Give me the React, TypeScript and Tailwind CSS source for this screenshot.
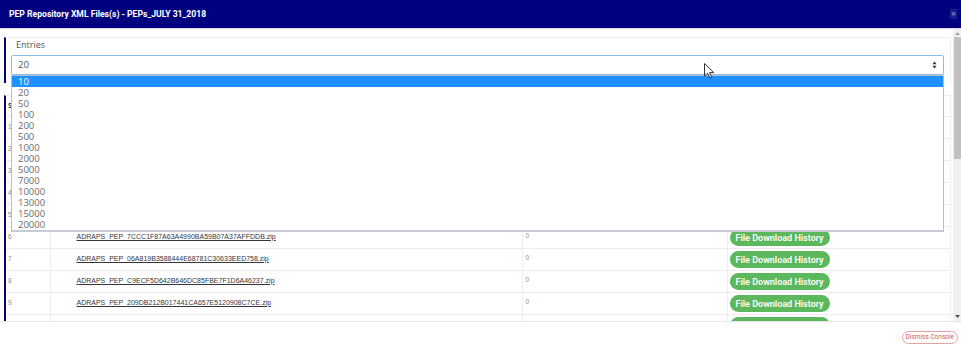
import React from "react";

const entryOptions = ["10", "20", "50", "100", "200", "500", "1000", "2000", "5000", "7000", "10000", "13000", "15000", "20000"];

const files = [
  { no: 1, name: "ADRAPS_PEP_1A2F3C4D5E6F47A8B9C0D1E2F3A4B5C6.zip", count: 0 },
  { no: 2, name: "ADRAPS_PEP_2B3C4D5E6F7A48B9C0D1E2F3A4B5C6D7.zip", count: 0 },
  { no: 3, name: "ADRAPS_PEP_3C4D5E6F7A8B49C0D1E2F3A4B5C6D7E8.zip", count: 0 },
  { no: 4, name: "ADRAPS_PEP_4D5E6F7A8B9C40D1E2F3A4B5C6D7E8F9.zip", count: 0 },
  { no: 5, name: "ADRAPS_PEP_5E6F7A8B9C0D41E2F3A4B5C6D7E8F9A0.zip", count: 0 },
  { no: 6, name: "ADRAPS_PEP_7CCC1F87A63A4990BA59B07A37AFFDDB.zip", count: 0 },
  { no: 7, name: "ADRAPS_PEP_06A819B3588444E68781C30633EED758.zip", count: 0 },
  { no: 8, name: "ADRAPS_PEP_C9ECF5D642B646DC85FBE7F1D6A46237.zip", count: 0 },
  { no: 9, name: "ADRAPS_PEP_209DB212B017441CA657E5120908C7CE.zip", count: 0 },
  { no: 10, name: "ADRAPS_PEP_8F1E2D3C4B5A46978877665544332211.zip", count: 0 },
];

function SortCaret() {
  return (
    <svg width="5" height="8" viewBox="0 0 5 8" className="shrink-0">
      <path d="M2.5 0.5 L4.6 3.2 H0.4 Z" fill="#333" />
      <path d="M2.5 7.5 L4.6 4.8 H0.4 Z" fill="#333" />
    </svg>
  );
}

function Cursor() {
  return (
    <svg width="11" height="16" viewBox="0 0 11 16" className="absolute left-[704px] top-[63px] z-20">
      <path d="M0.5 0.5 V13 L3.6 10.2 L5.8 15 L7.6 14.2 L5.5 9.6 H9.8 Z" fill="#fff" stroke="#333" strokeWidth="1" strokeLinejoin="round" />
    </svg>
  );
}

export default function App() {
  return (
    <div className="w-[961px] h-[348px] bg-white flex flex-col overflow-hidden relative" style={{ fontFamily: "'Open Sans', sans-serif" }}>
      {/* Header */}
      <div className="h-[29px] shrink-0 bg-[#010180] flex items-center justify-between pl-[9px] pr-[4px] border-b border-[#d8d8e8]">
        <span className="text-white text-[8.6px] font-bold font-['Roboto',sans-serif]">
          PEP Repository XML Files(s) - PEPs_JULY 31_2018
        </span>
        <span className="w-[7px] h-[10px] bg-[#1b1b8e] text-[#9a9ac4] text-[9px] leading-[10px] flex items-center justify-center">×</span>
      </div>

      {/* Body */}
      <div className="h-[293px] shrink-0 flex border-b border-[#e6e6e6]">
        <div className="flex-1 overflow-hidden relative pl-[4px] pr-[2px]">
          {/* Entries panel */}
          <div className="mt-[8px] h-[46px] border-l-2 border-l-[#010180] border-t border-t-[#eeeeee] border-r border-r-[#f0f0f0]">
            <div className="h-[17px] pl-[10px] pt-[1px] text-[9px] leading-[12px] text-[#555]">Entries</div>
            <div className="relative ml-[5px] mr-[6px] h-[20px] border border-[#86bde9] rounded-[2px] flex items-center justify-between pl-[6px] pr-[6px] text-[9.5px] text-[#555]">
              <span>20</span>
              <SortCaret />
              {/* Open list */}
              <div className="absolute left-[-1px] right-[-1px] top-[19px] z-10 bg-white border border-[#b9bdcc] border-b-2 border-b-[#c8cad8]">
                {entryOptions.map((o, i) => (
                  <div
                    key={o}
                    className={`h-[11px] leading-[11px] pl-[6px] text-[9.5px] ${i === 0 ? "bg-[#1e90ff] text-white" : "text-[#6a6a6a]"}`}
                  >
                    {o}
                  </div>
                ))}
              </div>
            </div>
          </div>

          {/* Table panel */}
          <div className="mt-[12px] border-l-2 border-l-[#010180] border-t border-t-[#eeeeee] border-r border-r-[#f0f0f0]">
            <table className="w-full table-fixed border-collapse text-[7px] leading-[10px]">
              <colgroup>
                <col className="w-[44px]" />
                <col className="w-[472px]" />
                <col className="w-[205px]" />
                <col />
              </colgroup>
              <thead>
                <tr className="h-[20px] text-[#333] font-bold">
                  <th className="p-0 text-left pl-[2px] border-r border-[#eee]">S.No</th>
                  <th className="p-0 text-left pl-[26px] border-r border-[#eee]">File Name</th>
                  <th className="p-0 text-left pl-[3px] border-r border-[#eee]">Record Count</th>
                  <th className="p-0 text-left pl-[2px]">Action</th>
                </tr>
              </thead>
              <tbody style={{ fontFamily: "'Liberation Sans', sans-serif" }}>
                {files.map((f) => (
                  <tr key={f.no} className="h-[22px] border-t border-[#ececec]">
                    <td className="p-0 pl-[2px] pb-[1px] text-[6.5px] text-[#888] border-r border-[#eee] align-middle">{f.no}</td>
                    <td className="p-0 pl-[26px] pb-[1px] border-r border-[#eee] align-middle">
                      <span className="text-[7px] text-[#363640] underline whitespace-nowrap">{f.name}</span>
                    </td>
                    <td className="p-0 pl-[3px] pb-[2px] text-[6.5px] text-[#8a8a8a] border-r border-[#eee] align-middle">{f.count}</td>
                    <td className="p-0 pl-[2px] pt-[1px] align-middle">
                      <button className="h-[17px] w-[100px] rounded-full bg-[#5cb85c] text-white text-[9px] font-semibold font-['Roboto',sans-serif] flex items-center justify-center">
                        File Download History
                      </button>
                    </td>
                  </tr>
                ))}
              </tbody>
            </table>
          </div>
        </div>

        {/* Scrollbar */}
        <div className="w-[8px] bg-[#f1f1f1] flex flex-col items-center">
          <div className="h-[8px] flex items-center justify-center">
            <svg width="5" height="3" viewBox="0 0 5 3"><path d="M2.5 0 L5 3 H0 Z" fill="#a3a3a3" /></svg>
          </div>
          <div className="w-[7px] h-[122px] bg-[#c1c1c1]" />
          <div className="flex-1" />
          <div className="h-[10px] flex items-center justify-center">
            <svg width="5" height="3" viewBox="0 0 5 3"><path d="M2.5 3 L5 0 H0 Z" fill="#505050" /></svg>
          </div>
        </div>
      </div>

      {/* Footer */}
      <div className="flex-1 flex justify-end items-start pt-[9px] pr-[3px]">
        <button className="h-[13px] px-[3px] rounded-full border border-[#e3a3a3] text-[#d05a5a] text-[6.5px] leading-[11px] font-['Roboto',sans-serif]">
          Dismiss Console
        </button>
      </div>

      <Cursor />
    </div>
  );
}
